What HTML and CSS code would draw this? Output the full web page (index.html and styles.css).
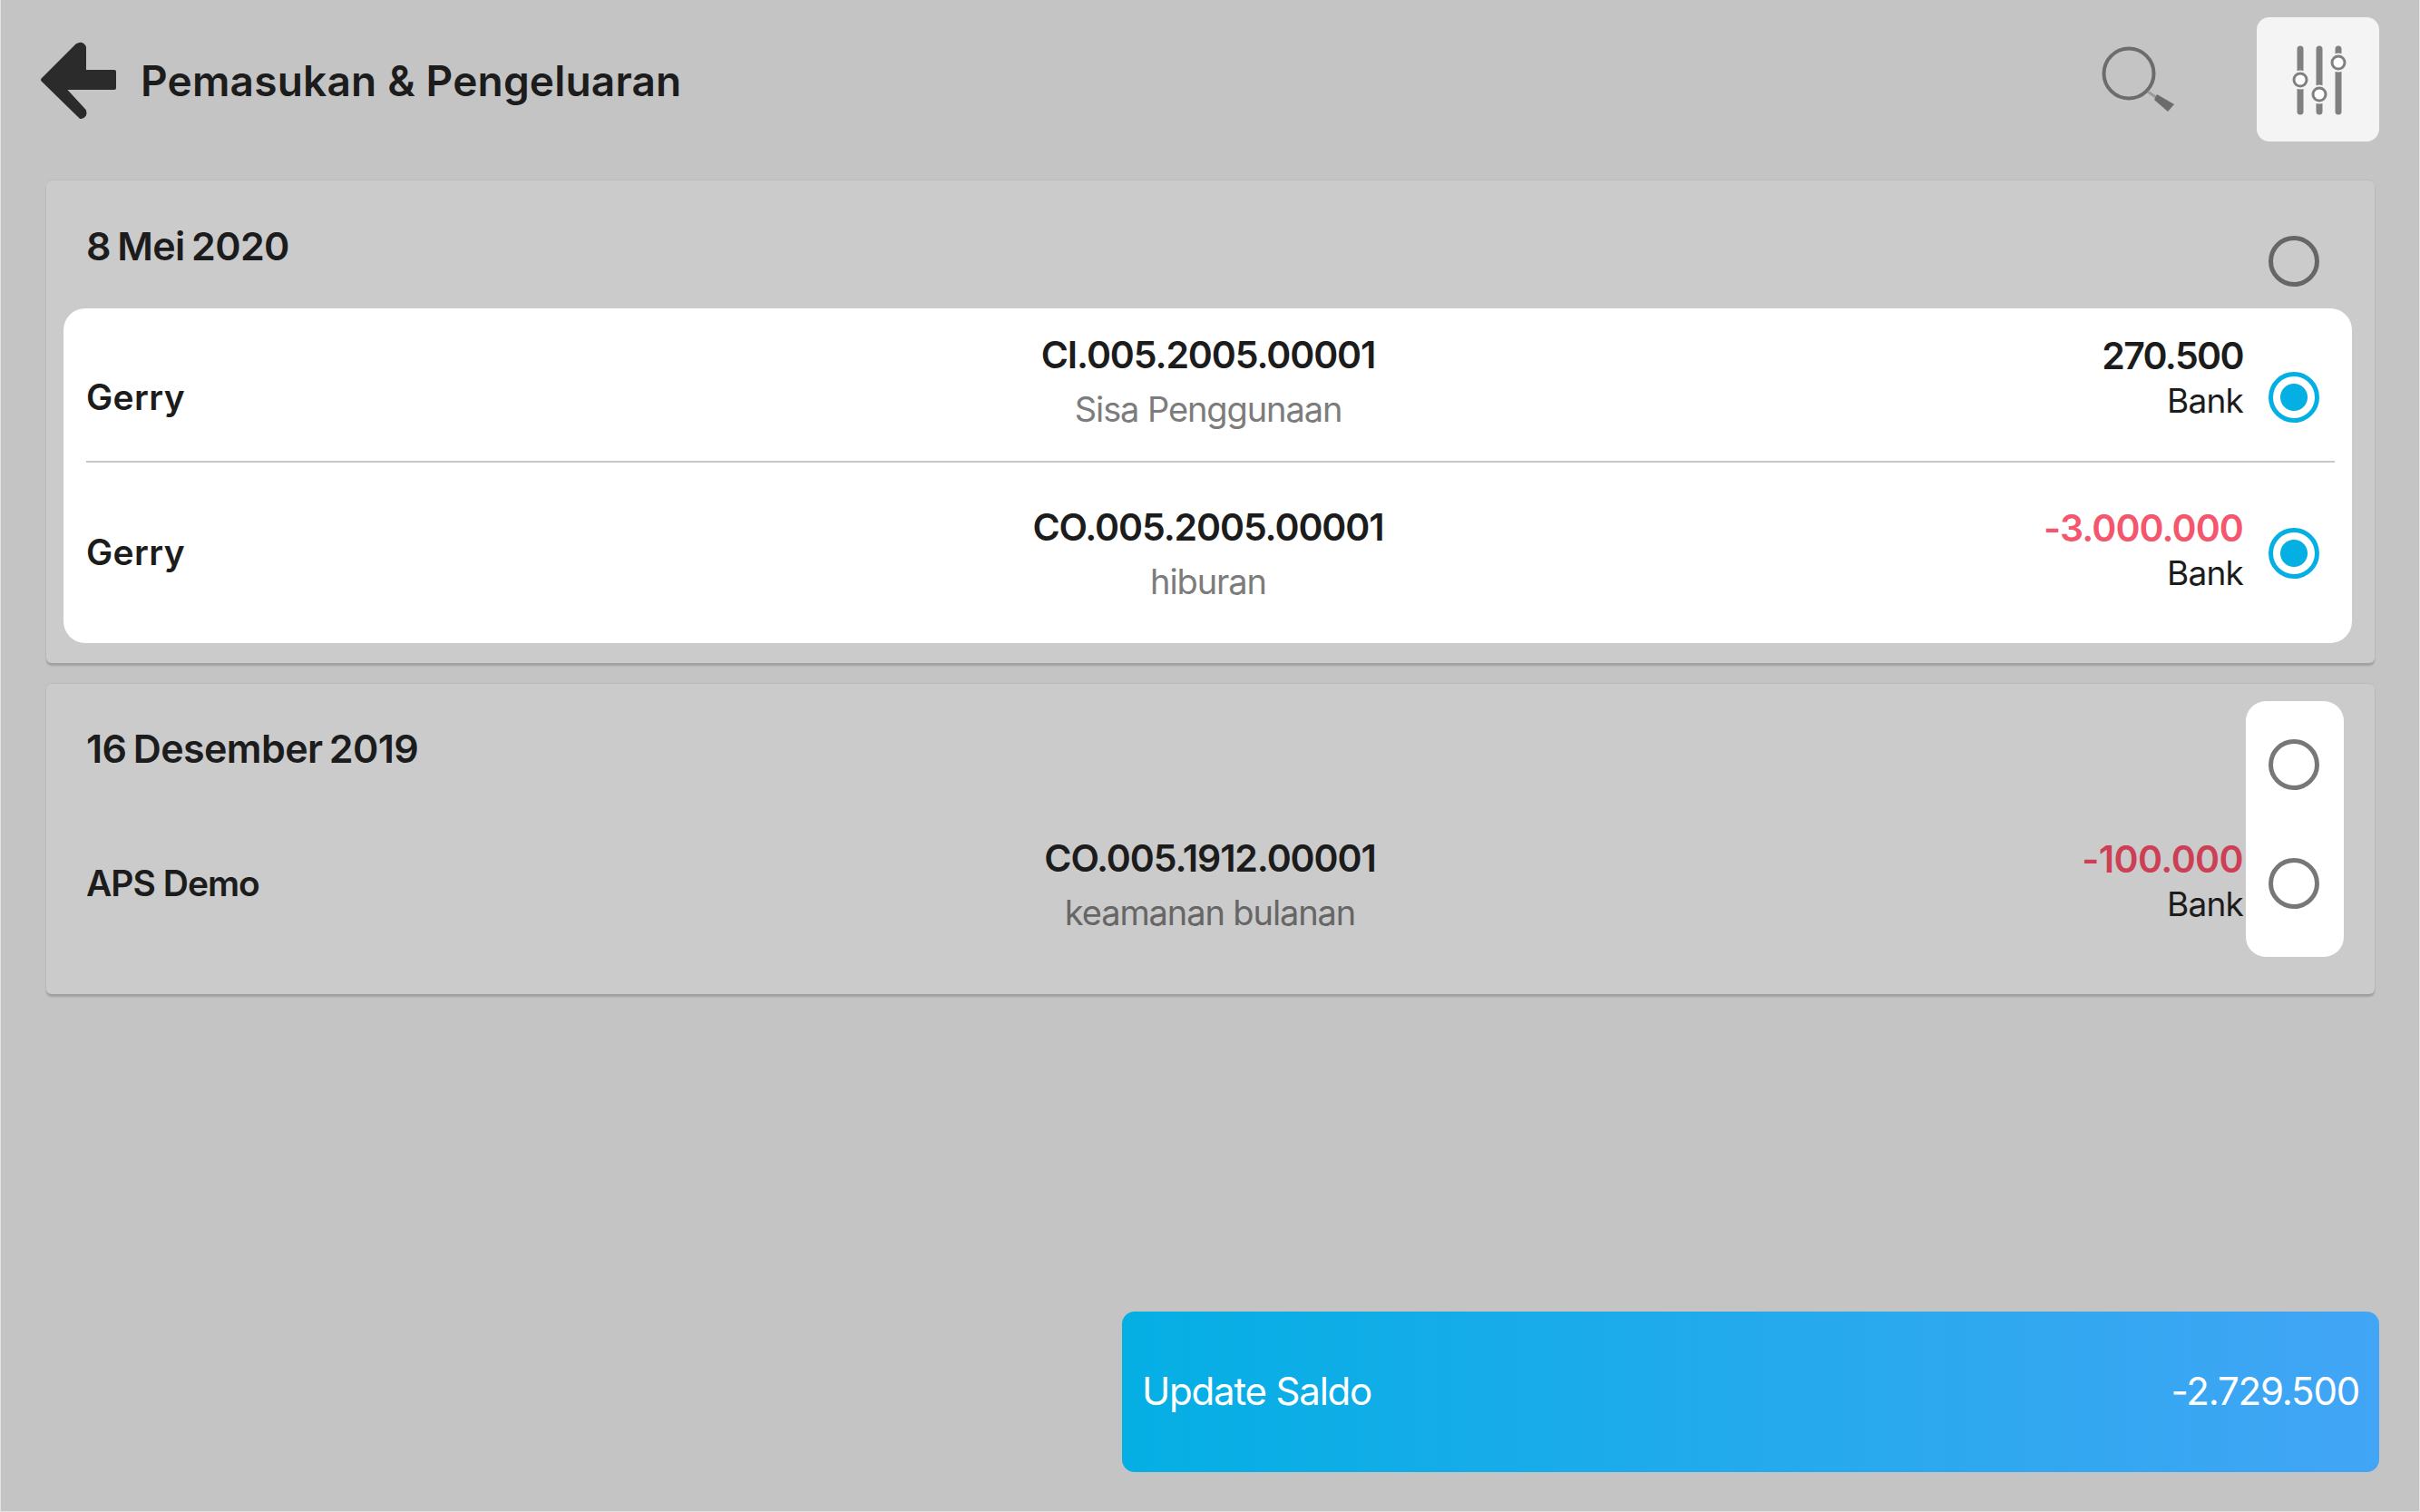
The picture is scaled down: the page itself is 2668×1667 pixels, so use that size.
FILE: index.html
```html
<!DOCTYPE html>
<html lang="en">
<head>
  <meta charset="UTF-8" />
  <title>Pemasukan &amp; Pengeluaran</title>
  <link rel="stylesheet" href="styles.css">
</head>
<body>
  <div class="page">
    <header class="topbar">
      <svg class="back-icon" viewBox="43 44 88 90"><path d="M47 88 L85 50 Q90 47 93 52 L93 79 L126 79 L126 97 L70 97 L93 122 Q95 128 89 129 Z" fill="#2b2b2b" stroke="#2b2b2b" stroke-width="4" stroke-linejoin="round"/></svg>
      <h1 class="title">Pemasukan &amp; Pengeluaran</h1>
      <svg class="search-icon" viewBox="2310 45 100 85">
        <circle cx="2347" cy="81" r="27.5" fill="none" stroke="#6c6c6c" stroke-width="4"/>
        <path d="M2368 101 L2378 108" stroke="#9a9a9a" stroke-width="3"/>
        <path d="M2378 104 L2397 115 L2390 123 L2375 110 Z" fill="#6c6c6c"/>
      </svg>
      <button class="filter-btn">
        <svg viewBox="0 0 135 137" fill="none">
          <path d="M48 35V104M69 35V104M90 35V104" stroke="#808080" stroke-width="7" stroke-linecap="round"/>
          <circle cx="48" cy="69" r="10.5" fill="#f4f4f4"/><circle cx="69" cy="85" r="10.5" fill="#f4f4f4"/><circle cx="90" cy="50" r="10.5" fill="#f4f4f4"/>
          <circle cx="48" cy="69" r="7" fill="#fff" stroke="#808080" stroke-width="3"/>
          <circle cx="69" cy="85" r="7" fill="#fff" stroke="#808080" stroke-width="3"/>
          <circle cx="90" cy="50" r="7" fill="#fff" stroke="#808080" stroke-width="3"/>
        </svg>
      </button>
    </header>

    <section class="card">
      <div class="card-head">
        <h2>8 Mei 2020</h2>
        <span class="radio head-radio"></span>
      </div>
      <div class="list-white">
        <div class="row row-a">
          <div class="name">Gerry</div>
          <div class="mid"><b>CI.005.2005.00001</b><span>Sisa Penggunaan</span></div>
          <div class="amt"><b class="plus">270.500</b><span>Bank</span></div>
          <span class="radio on"></span>
        </div>
        <div class="row row-b">
          <div class="name">Gerry</div>
          <div class="mid"><b>CO.005.2005.00001</b><span>hiburan</span></div>
          <div class="amt"><b class="minus">-3.000.000</b><span>Bank</span></div>
          <span class="radio on"></span>
        </div>
      </div>
    </section>

    <section class="card card-second">
      <div class="radio-pill"><span class="radio"></span><span class="radio"></span></div>
      <div class="card-head">
        <h2>16 Desember 2019</h2>
      </div>
      <div class="row row-c">
        <div class="name">APS Demo</div>
        <div class="mid"><b>CO.005.1912.00001</b><span>keamanan bulanan</span></div>
        <div class="amt"><b class="minus dim">-100.000</b><span>Bank</span></div>
      </div>
    </section>

    <div class="bottom">
      <button class="update-btn"><span>Update Saldo</span><span>-2.729.500</span></button>
    </div>
  </div>
</body>
</html>
```

FILE: styles.css
```css
* {
  box-sizing: border-box;
}
html, body {
  margin: 0;
  height: 100%;
}
body {
  background-color: #c4c4c4;
  font-family: Inter, "Noto Sans", sans-serif;
  color: #1c1c1c;
  overflow: hidden;
}
.page {
  height: 1667px;
  display: flex;
  flex-direction: column;
  padding: 0 44px 43px 50px;
  border: solid #e4e4e4;
  border-width: 0 1px 1px 1px;
}
.topbar {
  height: 199px;
  display: flex;
  align-items: flex-start;
  padding-top: 19px;
  margin-left: -8px;
}
.back-icon {
  width: 88px;
  height: 90px;
  margin-top: 25px;
}
.title {
  font-size: 46px;
  line-height: 56px;
  font-weight: 600;
  letter-spacing: 0.2px;
  margin: 42px 0 0 24px;
  flex: 1;
}
.search-icon {
  width: 100px;
  height: 85px;
  margin: 26px 78px 0 0;
}
.filter-btn {
  width: 135px;
  height: 137px;
  padding: 0;
  background-color: #f4f4f4;
  border: none;
  border-radius: 14px;
}
.filter-btn svg {
  display: block;
  width: 100%;
  height: 100%;
}
.card {
  background-color: #cbcbcb;
  border-radius: 6px;
  box-shadow: 0 3px 2px #a0a0a0, 0 -1px 1px #bcbcbc;
  margin-right: 5px;
  height: 532px;
  position: relative;
}
.card-second {
  height: 342px;
  margin-top: 23px;
}
.card-head {
  height: 141px;
  display: flex;
  justify-content: space-between;
  padding: 46px 61px 0 44px;
}
.card-second .card-head {
  height: 142px;
  padding-top: 45px;
}
.card h2 {
  margin: 0;
  font-size: 43px;
  line-height: 52px;
  font-weight: 600;
  letter-spacing: -0.6px;
  word-spacing: -3px;
}
.head-radio {
  margin-top: 15px;
}
.radio {
  flex: none;
  width: 56px;
  height: 56px;
  border: 5px solid #666;
  border-radius: 50%;
  display: block;
}
.radio.on {
  border-color: #04afe4;
  background: radial-gradient(circle, #04afe4 0 14.5px, #fff 15.5px);
}
.list-white {
  height: 369px;
  margin: 0 25px 0 19px;
  background-color: #fff;
  border-radius: 24px;
  padding: 0 19px 0 25px;
}
.row {
  display: flex;
  align-items: center;
}
.row-a {
  height: 170px;
  border-bottom: 2px solid #c8c8c8;
}
.row-a .name {
  margin-top: 26px;
}
.row-a .radio {
  margin-top: 28px;
}
.row-a .mid {
  margin-bottom: 6px;
}
.row-a .amt {
  margin-bottom: 14px;
}
.row-b {
  height: 199px;
}
.row-b .name {
  margin-bottom: 2px;
}
.row-b .mid {
  margin-top: 3px;
}
.row-b .amt {
  margin-bottom: 6px;
}
.row-c {
  height: 154px;
  padding-left: 44px;
}
.row-c .name {
  letter-spacing: -1px;
}
.row-c .mid {
  margin-top: 6px;
  transform: translateX(2px);
}
.row-c .amt {
  margin-bottom: 3px;
}
.name {
  width: 837px;
  font-size: 39px;
  font-weight: 600;
  letter-spacing: 0.4px;
}
.mid {
  width: 800px;
  display: flex;
  flex-direction: column;
  align-items: center;
  line-height: 60px;
  font-size: 38px;
}
.mid b {
  font-weight: 600;
  font-size: 41px;
  letter-spacing: -1.1px;
}
.mid span {
  color: #7c7c7c;
  letter-spacing: -1.1px;
}
.card-second .mid span {
  color: #666;
}
.amt {
  width: 741px;
  display: flex;
  flex-direction: column;
  align-items: flex-end;
  line-height: 50px;
  font-size: 37px;
  margin-right: 28px;
  letter-spacing: -0.8px;
}
.amt b {
  font-weight: 600;
  font-size: 41px;
}
.plus {
  letter-spacing: -1.6px;
}
.minus {
  color: #f4566e;
  letter-spacing: -0.9px;
}
.minus.dim {
  color: #cc3f55;
  letter-spacing: -0.6px;
}
.radio-pill {
  position: absolute;
  right: 34px;
  top: 19px;
  width: 108px;
  height: 282px;
  background-color: #fff;
  border-radius: 22px;
  display: flex;
  flex-direction: column;
  align-items: center;
  gap: 75px;
  padding: 42px 2px 0 0;
}
.radio-pill .radio {
  border-color: #777;
}
.bottom {
  margin-top: auto;
  display: flex;
  justify-content: flex-end;
}
.update-btn {
  width: 1386px;
  height: 177px;
  border: none;
  border-radius: 14px;
  background: linear-gradient(90deg, #04afe4, #42a5f5);
  color: #fff;
  font-family: inherit;
  font-size: 42px;
  letter-spacing: -1.2px;
  display: flex;
  align-items: center;
  justify-content: space-between;
  padding: 0 22px 2px 22px;
}
```
